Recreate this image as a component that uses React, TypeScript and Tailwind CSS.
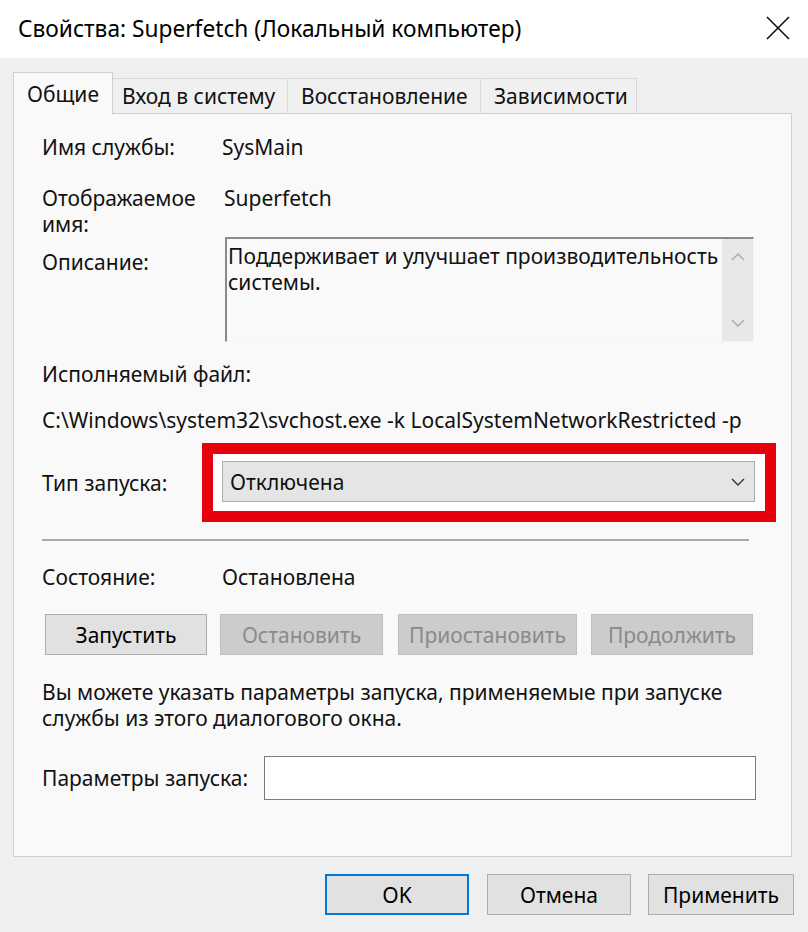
import React from "react";

const font = { fontFamily: '"Noto Sans", "Open Sans", sans-serif' };

function Chevron({ up, className }: { up?: boolean; className?: string }) {
  return (
    <svg width="16" height="10" viewBox="0 0 16 10" className={className}>
      <path
        d={up ? "M2 8 L8 2 L14 8" : "M2 2 L8 8 L14 2"}
        fill="none"
        stroke="currentColor"
        strokeWidth="1.4"
      />
    </svg>
  );
}

function Button({
  children,
  width,
  disabled,
  primary,
}: {
  children: React.ReactNode;
  width: string;
  disabled?: boolean;
  primary?: boolean;
}) {
  const base = "flex h-[41px] items-center justify-center text-[21px] " + width;
  if (disabled)
    return (
      <div className={base + " border border-[#bfbfbf] bg-[#cccccc] text-[#8a8a8a]"}>
        {children}
      </div>
    );
  if (primary)
    return (
      <div className={base + " border-2 border-[#0078d7] bg-[#e1e1e1] text-black"}>
        {children}
      </div>
    );
  return (
    <div className={base + " border border-[#adadad] bg-[#e1e1e1] text-black"}>
      {children}
    </div>
  );
}

export default function App() {
  return (
    <div
      className="h-[932px] w-[808px] overflow-hidden bg-[#efefef] text-[21px] leading-[26px] text-[#111]"
      style={font}
    >
      {/* Title bar */}
      <div className="flex h-[58px] items-center justify-between bg-white pl-[18px] pr-[18px]">
        <span className="text-[22.7px] text-black">Свойства: Superfetch (Локальный компьютер)</span>
        <svg width="24" height="24" viewBox="0 0 24 24" className="mt-[-2px]">
          <path d="M1 1 L23 23 M23 1 L1 23" stroke="#111" strokeWidth="1.6" />
        </svg>
      </div>

      {/* Tabs */}
      <div className="flex h-[55px] items-end pl-[13px]">
        <div className="relative z-10 mb-[-1px] flex h-[42px] w-[100px] items-center border border-b-0 border-[#d0d0d0] bg-[#f9f9f9] pl-[13px]">
          Общие
        </div>
        <div className="flex h-[35px] w-[175px] items-center border border-l-0 border-b-0 border-[#d9d9d9] bg-[#f0f0f0] pl-[9px]">
          Вход в систему
        </div>
        <div className="flex h-[35px] w-[193px] items-center border border-l-0 border-b-0 border-[#d9d9d9] bg-[#f0f0f0] pl-[13px]">
          Восстановление
        </div>
        <div className="flex h-[35px] w-[156px] items-center border border-l-0 border-b-0 border-[#d9d9d9] bg-[#f0f0f0] pl-[13px]">
          Зависимости
        </div>
      </div>

      {/* Panel */}
      <div className="ml-[13px] flex h-[744px] w-[779px] flex-col border border-[#d0d0d0] bg-[#f9f9f9] pl-[28px]">
        <div className="mt-[19px] flex h-[28px] items-center">
          <div className="w-[180px]">Имя службы:</div>
          <div>SysMain</div>
        </div>

        <div className="mt-[24px] flex h-[52px]">
          <div className="w-[182px]">
            Отображаемое
            <br />
            имя:
          </div>
          <div>Superfetch</div>
        </div>

        <div className="flex">
          <div className="w-[183px] pt-[12px]">Описание:</div>
          <div className="flex h-[105px] w-[529px] border border-t-2 border-l-2 border-[#f4f4f4] border-t-[#8a8a8a] border-l-[#8a8a8a] bg-[#f9f9f9]">
            <div className="flex-1 pl-[1px] pt-[4px]">
              Поддерживает и улучшает производительность
              <br />
              системы.
            </div>
            <div className="flex w-[31px] flex-col items-center justify-between bg-[#e8e8e8] py-[13px] text-[#a8a8a8]">
              <Chevron up />
              <Chevron />
            </div>
          </div>
        </div>

        <div className="mt-[19px]">Исполняемый файл:</div>
        <div className="mt-[20px]">C:\Windows\system32\svchost.exe -k LocalSystemNetworkRestricted -p</div>

        <div className="mt-[10px] flex items-center">
          <div className="w-[160px]">Тип запуска:</div>
          <div className="h-[79px] w-[574px] border-[11px] border-[#e8000c] bg-white pl-[9px] pt-[7px]">
            <div className="flex h-[41px] w-[533px] items-center justify-between border border-[#adadad] bg-[#e5e5e5] pl-[7px] pr-[8px]">
              <span>Отключена</span>
              <Chevron className="text-[#333]" />
            </div>
          </div>
        </div>

        <div className="mt-[17px] h-[2px] w-[707px] bg-[#a9a9a9]" />

        <div className="mt-[23px] flex">
          <div className="w-[180px]">Состояние:</div>
          <div>Остановлена</div>
        </div>

        <div className="ml-[3px] mt-[24px] flex">
          <Button width="w-[162px]">Запустить</Button>
          <div className="ml-[13px]">
            <Button width="w-[163px]" disabled>
              Остановить
            </Button>
          </div>
          <div className="ml-[15px]">
            <Button width="w-[179px]" disabled>
              Приостановить
            </Button>
          </div>
          <div className="ml-[14px]">
            <Button width="w-[162px]" disabled>
              Продолжить
            </Button>
          </div>
        </div>

        <div className="mt-[24px]">
          Вы можете указать параметры запуска, применяемые при запуске
          <br />
          службы из этого диалогового окна.
        </div>

        <div className="mt-[25px] flex items-center">
          <div className="w-[222px]">Параметры запуска:</div>
          <div className="h-[44px] w-[492px] border border-[#7a7a7a] bg-white" />
        </div>
      </div>

      {/* Bottom buttons */}
      <div className="mt-[17px] flex pl-[325px]">
        <Button width="w-[144px]" primary>
          OK
        </Button>
        <div className="ml-[18px]">
          <Button width="w-[144px]">Отмена</Button>
        </div>
        <div className="ml-[17px]">
          <Button width="w-[146px]">Применить</Button>
        </div>
      </div>
    </div>
  );
}
